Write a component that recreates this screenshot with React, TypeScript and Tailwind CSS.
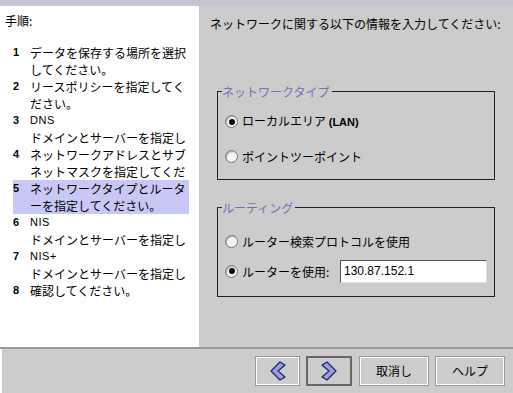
import React from 'react';

const jp = { fontFamily: '"Noto Sans CJK JP", "Liberation Sans", sans-serif' };
const latin = { fontFamily: '"Liberation Sans", Arial, sans-serif' };

interface Step {
  num: string;
  lines: string[];
  active?: boolean;
}

const steps: Step[] = [
  { num: '1', lines: ['データを保存する場所を選択', 'してください。'] },
  { num: '2', lines: ['リースポリシーを指定してく', 'ださい。'] },
  { num: '3', lines: ['DNS', 'ドメインとサーバーを指定し'] },
  { num: '4', lines: ['ネットワークアドレスとサブ', 'ネットマスクを指定してくだ'] },
  { num: '5', lines: ['ネットワークタイプとルータ', 'ーを指定してください。'], active: true },
  { num: '6', lines: ['NIS', 'ドメインとサーバーを指定し'] },
  { num: '7', lines: ['NIS+', 'ドメインとサーバーを指定し'] },
  { num: '8', lines: ['確認してください。'] },
];

const Radio: React.FC<{ checked?: boolean }> = ({ checked }) => (
  <span className="w-[13px] h-[13px] rounded-full border border-[#777] bg-[#f4f4f4] flex items-center justify-center shrink-0 shadow-[inset_1px_1px_0_#aaa]">
    {checked && <span className="w-[6px] h-[6px] rounded-full bg-black" />}
  </span>
);

const Chevron: React.FC<{ dir: 'left' | 'right' }> = ({ dir }) => (
  <svg width="16" height="20" viewBox="0 0 16 20">
    <polygon
      points={dir === 'left' ? '10,1 15,4 8,10 15,16 10,19 1,10' : '6,1 1,4 8,10 1,16 6,19 15,10'}
      fill="#9a9aee"
      stroke="#20205a"
      strokeWidth="1.2"
      strokeLinejoin="round"
    />
  </svg>
);

export default function App() {
  return (
    <div className="w-[513px] h-[393px] flex flex-col bg-[#cccccc] overflow-hidden text-black" style={jp}>
      <div className="h-[6px] bg-[#c4c4d2] shrink-0" />

      <div className="flex h-[341px] shrink-0">
        {/* steps */}
        <div className="w-[199px] bg-white pt-[6px] overflow-hidden">
          <div className="pl-[5px] text-[12px] leading-[17px]">手順:</div>
          <div className="mt-[15px] text-[12px] leading-[17px]">
            {steps.map((s) => (
              <div key={s.num} className={`flex ml-[13px] w-[176px] ${s.active ? 'bg-[#c8c8f4]' : ''}`}>
                <span className="w-[17px] shrink-0 font-bold text-[11px]" style={latin}>
                  {s.num}
                </span>
                <div className="whitespace-nowrap overflow-visible">
                  {s.lines.map((l, i) => (
                    <div key={i} style={/^[A-Z+]+$/.test(l) ? latin : undefined} className={/^[A-Z+]+$/.test(l) ? 'text-[11px] tracking-[0.5px]' : ''}>
                      {l}
                    </div>
                  ))}
                </div>
              </div>
            ))}
          </div>
        </div>

        {/* form */}
        <div className="flex-1 pt-[9px] pl-[11px] text-[12px] leading-[17px]">
          <div>ネットワークに関する以下の情報を入力してください:</div>

          <fieldset className="mt-[51px] ml-[7px] mr-[18px] border border-[#222] px-[7px] pt-[4px] pb-[5px]">
            <legend className="ml-[-3px] pr-[2px] text-[#7272b4] leading-[17px]">ネットワークタイプ</legend>
            <div className="h-[35px] flex items-center gap-[4px]">
              <Radio checked />
              <span>
                ローカルエリア{' '}
                <span className="font-bold text-[11px]" style={latin}>
                  (LAN)
                </span>
              </span>
            </div>
            <div className="h-[35px] flex items-center gap-[4px]">
              <Radio />
              <span>ポイントツーポイント</span>
            </div>
          </fieldset>

          <fieldset className="mt-[19px] ml-[7px] mr-[18px] border border-[#222] px-[7px] pt-[10px] pb-[10px]">
            <legend className="ml-[-3px] pr-[2px] text-[#7272b4] leading-[17px]">ルーティング</legend>
            <div className="h-[30px] flex items-center gap-[4px]">
              <Radio />
              <span>ルーター検索プロトコルを使用</span>
            </div>
            <div className="h-[30px] flex items-center gap-[4px]">
              <Radio checked />
              <span className="w-[94px]">ルーターを使用:</span>
              <input
                readOnly
                value="130.87.152.1"
                className="w-[147px] h-[23px] bg-white border border-[#555] border-r-[#ddd] border-b-[#ddd] px-[3px] text-[12px] outline-none"
                style={latin}
              />
            </div>
          </fieldset>
        </div>
      </div>

      {/* button bar */}
      <div className="flex-1 border-t-2 border-[#9a9a9a] flex justify-end items-center pr-[8px] gap-[6px] shadow-[inset_2px_0_0_#fff]">
        <button className="w-[45px] h-[30px] border border-[#999] shadow-[inset_1px_1px_0_#fff,inset_-1px_-1px_0_#fff] flex items-center justify-center bg-[#cccccc]">
          <Chevron dir="left" />
        </button>
        <button className="w-[46px] h-[30px] border-2 border-[#666] flex items-center justify-center bg-[#cccccc]">
          <Chevron dir="right" />
        </button>
        <button className="ml-[1px] w-[70px] h-[30px] border border-[#999] shadow-[inset_1px_1px_0_#fff,inset_-1px_-1px_0_#fff] bg-[#cccccc] text-[12px]">
          取消し
        </button>
        <button className="w-[70px] h-[30px] border border-[#999] shadow-[inset_1px_1px_0_#fff,inset_-1px_-1px_0_#fff] bg-[#cccccc] text-[12px]">
          ヘルプ
        </button>
      </div>
    </div>
  );
}
